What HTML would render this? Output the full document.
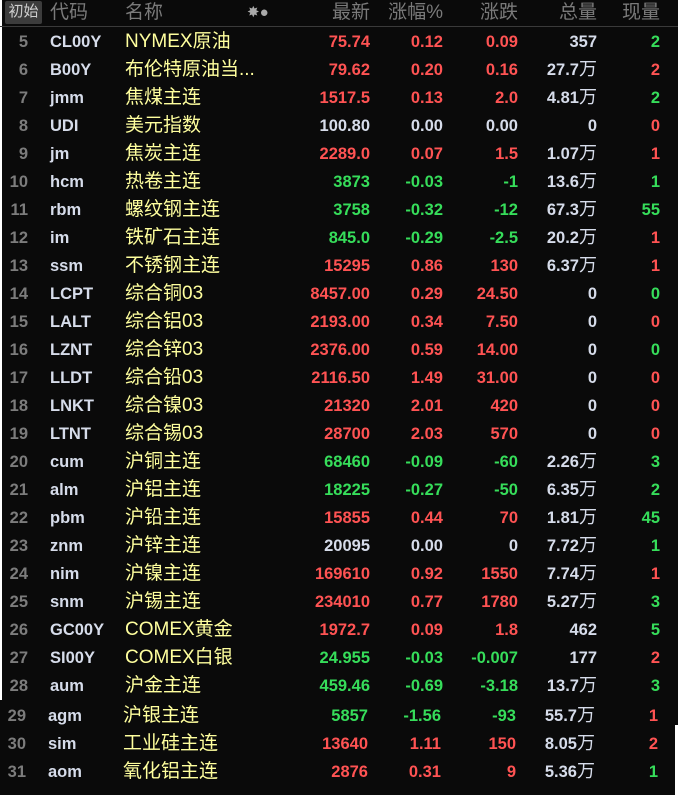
<!DOCTYPE html>
<html><head><meta charset="utf-8"><style>
body{margin:0;width:678px;height:795px;background:#0a0a0a;overflow:hidden;position:relative;font-family:"Liberation Sans","Noto Sans CJK SC",sans-serif}
.hd{position:absolute;left:0;top:0;width:678px;height:26px;border-bottom:1px solid #3a3a3a;color:#7a7a7a;font-size:19px}
.hd span{position:absolute;top:2px;line-height:22px}
.btn{left:5px;top:1px!important;width:37px;height:23px;background:#3c3c3c;color:#cfcfcf;font-size:15px!important;text-align:center;border-radius:2px}
.r{position:absolute;left:0;width:678px;height:28px;font-size:16.5px;font-weight:bold;line-height:28px}
.r span{position:absolute;top:0}
.n{right:650px;color:#7c7c7c;text-align:right}
.c{left:50px;color:#d6dcea}
.m{left:125px;color:#ffff9e;font-weight:normal;font-size:19px}
.a{right:308px;text-align:right}
.b{right:235px;text-align:right}
.d{right:160px;text-align:right}
.v{right:81px;text-align:right;color:#d6dcea}
.v i{font-style:normal;font-weight:normal;font-size:18px;line-height:16px}
.x{right:18px;text-align:right}
.R{color:#ff5353}.G{color:#36dd5a}.W{color:#d6dcea}
.sh{left:-2px}
</style></head><body>
<div style="position:absolute;left:0;top:0;width:2px;height:700px;background:#fff"></div>
<div style="position:absolute;left:675px;top:725px;width:3px;height:70px;background:#fff"></div>
<div class="hd">
<span class="btn">初始</span>
<span style="left:50px">代码</span>
<span style="left:125px">名称</span>
<span style="left:247px;font-size:15px;color:#aaa">✸●</span>
<span style="right:308px">最新</span>
<span style="right:235px">涨幅%</span>
<span style="right:160px">涨跌</span>
<span style="right:81px">总量</span>
<span style="right:18px">现量</span>
</div>
<div class="r" style="top:28px"><span class="n">5</span><span class="c">CL00Y</span><span class="m">NYMEX原油</span><span class="a R">75.74</span><span class="b R">0.12</span><span class="d R">0.09</span><span class="v">357</span><span class="x G">2</span></div>
<div class="r" style="top:56px"><span class="n">6</span><span class="c">B00Y</span><span class="m">布伦特原油当...</span><span class="a R">79.62</span><span class="b R">0.20</span><span class="d R">0.16</span><span class="v">27.7<i>万</i></span><span class="x R">2</span></div>
<div class="r" style="top:84px"><span class="n">7</span><span class="c">jmm</span><span class="m">焦煤主连</span><span class="a R">1517.5</span><span class="b R">0.13</span><span class="d R">2.0</span><span class="v">4.81<i>万</i></span><span class="x G">2</span></div>
<div class="r" style="top:112px"><span class="n">8</span><span class="c">UDI</span><span class="m">美元指数</span><span class="a W">100.80</span><span class="b W">0.00</span><span class="d W">0.00</span><span class="v">0</span><span class="x R">0</span></div>
<div class="r" style="top:140px"><span class="n">9</span><span class="c">jm</span><span class="m">焦炭主连</span><span class="a R">2289.0</span><span class="b R">0.07</span><span class="d R">1.5</span><span class="v">1.07<i>万</i></span><span class="x R">1</span></div>
<div class="r" style="top:168px"><span class="n">10</span><span class="c">hcm</span><span class="m">热卷主连</span><span class="a G">3873</span><span class="b G">-0.03</span><span class="d G">-1</span><span class="v">13.6<i>万</i></span><span class="x G">1</span></div>
<div class="r" style="top:196px"><span class="n">11</span><span class="c">rbm</span><span class="m">螺纹钢主连</span><span class="a G">3758</span><span class="b G">-0.32</span><span class="d G">-12</span><span class="v">67.3<i>万</i></span><span class="x G">55</span></div>
<div class="r" style="top:224px"><span class="n">12</span><span class="c">im</span><span class="m">铁矿石主连</span><span class="a G">845.0</span><span class="b G">-0.29</span><span class="d G">-2.5</span><span class="v">20.2<i>万</i></span><span class="x R">1</span></div>
<div class="r" style="top:252px"><span class="n">13</span><span class="c">ssm</span><span class="m">不锈钢主连</span><span class="a R">15295</span><span class="b R">0.86</span><span class="d R">130</span><span class="v">6.37<i>万</i></span><span class="x R">1</span></div>
<div class="r" style="top:280px"><span class="n">14</span><span class="c">LCPT</span><span class="m">综合铜03</span><span class="a R">8457.00</span><span class="b R">0.29</span><span class="d R">24.50</span><span class="v">0</span><span class="x G">0</span></div>
<div class="r" style="top:308px"><span class="n">15</span><span class="c">LALT</span><span class="m">综合铝03</span><span class="a R">2193.00</span><span class="b R">0.34</span><span class="d R">7.50</span><span class="v">0</span><span class="x R">0</span></div>
<div class="r" style="top:336px"><span class="n">16</span><span class="c">LZNT</span><span class="m">综合锌03</span><span class="a R">2376.00</span><span class="b R">0.59</span><span class="d R">14.00</span><span class="v">0</span><span class="x G">0</span></div>
<div class="r" style="top:364px"><span class="n">17</span><span class="c">LLDT</span><span class="m">综合铅03</span><span class="a R">2116.50</span><span class="b R">1.49</span><span class="d R">31.00</span><span class="v">0</span><span class="x R">0</span></div>
<div class="r" style="top:392px"><span class="n">18</span><span class="c">LNKT</span><span class="m">综合镍03</span><span class="a R">21320</span><span class="b R">2.01</span><span class="d R">420</span><span class="v">0</span><span class="x R">0</span></div>
<div class="r" style="top:420px"><span class="n">19</span><span class="c">LTNT</span><span class="m">综合锡03</span><span class="a R">28700</span><span class="b R">2.03</span><span class="d R">570</span><span class="v">0</span><span class="x R">0</span></div>
<div class="r" style="top:448px"><span class="n">20</span><span class="c">cum</span><span class="m">沪铜主连</span><span class="a G">68460</span><span class="b G">-0.09</span><span class="d G">-60</span><span class="v">2.26<i>万</i></span><span class="x G">3</span></div>
<div class="r" style="top:476px"><span class="n">21</span><span class="c">alm</span><span class="m">沪铝主连</span><span class="a G">18225</span><span class="b G">-0.27</span><span class="d G">-50</span><span class="v">6.35<i>万</i></span><span class="x G">2</span></div>
<div class="r" style="top:504px"><span class="n">22</span><span class="c">pbm</span><span class="m">沪铅主连</span><span class="a R">15855</span><span class="b R">0.44</span><span class="d R">70</span><span class="v">1.81<i>万</i></span><span class="x G">45</span></div>
<div class="r" style="top:532px"><span class="n">23</span><span class="c">znm</span><span class="m">沪锌主连</span><span class="a W">20095</span><span class="b W">0.00</span><span class="d W">0</span><span class="v">7.72<i>万</i></span><span class="x G">1</span></div>
<div class="r" style="top:560px"><span class="n">24</span><span class="c">nim</span><span class="m">沪镍主连</span><span class="a R">169610</span><span class="b R">0.92</span><span class="d R">1550</span><span class="v">7.74<i>万</i></span><span class="x R">1</span></div>
<div class="r" style="top:588px"><span class="n">25</span><span class="c">snm</span><span class="m">沪锡主连</span><span class="a R">234010</span><span class="b R">0.77</span><span class="d R">1780</span><span class="v">5.27<i>万</i></span><span class="x G">3</span></div>
<div class="r" style="top:616px"><span class="n">26</span><span class="c">GC00Y</span><span class="m">COMEX黄金</span><span class="a R">1972.7</span><span class="b R">0.09</span><span class="d R">1.8</span><span class="v">462</span><span class="x G">5</span></div>
<div class="r" style="top:644px"><span class="n">27</span><span class="c">SI00Y</span><span class="m">COMEX白银</span><span class="a G">24.955</span><span class="b G">-0.03</span><span class="d G">-0.007</span><span class="v">177</span><span class="x R">2</span></div>
<div class="r" style="top:672px"><span class="n">28</span><span class="c">aum</span><span class="m">沪金主连</span><span class="a G">459.46</span><span class="b G">-0.69</span><span class="d G">-3.18</span><span class="v">13.7<i>万</i></span><span class="x G">3</span></div>
<div class="r sh" style="top:702px"><span class="n">29</span><span class="c">agm</span><span class="m">沪银主连</span><span class="a G">5857</span><span class="b G">-1.56</span><span class="d G">-93</span><span class="v">55.7<i>万</i></span><span class="x R">1</span></div>
<div class="r sh" style="top:730px"><span class="n">30</span><span class="c">sim</span><span class="m">工业硅主连</span><span class="a R">13640</span><span class="b R">1.11</span><span class="d R">150</span><span class="v">8.05<i>万</i></span><span class="x R">2</span></div>
<div class="r sh" style="top:758px"><span class="n">31</span><span class="c">aom</span><span class="m">氧化铝主连</span><span class="a R">2876</span><span class="b R">0.31</span><span class="d R">9</span><span class="v">5.36<i>万</i></span><span class="x G">1</span></div>
</body></html>
